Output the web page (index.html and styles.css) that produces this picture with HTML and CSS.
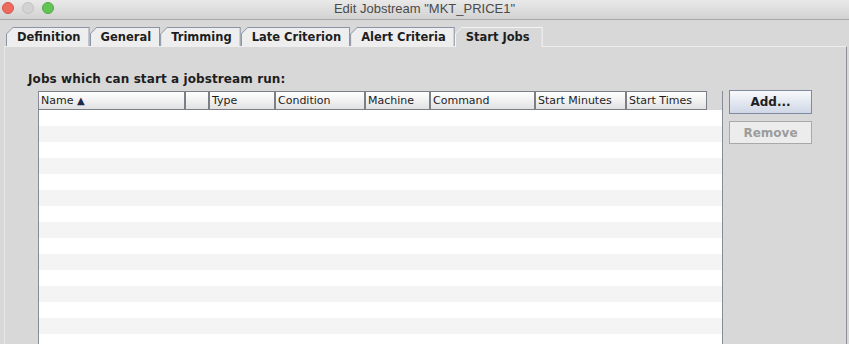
FILE: index.html
```html
<!DOCTYPE html>
<html>
<head>
    <title>Edit Jobstream</title>
    <link rel="stylesheet" href="styles.css">
</head>
<body>
    <div class="titlebar">
        <div class="lights">
            <span class="light red"></span>
            <span class="light grey"></span>
            <span class="light green"></span>
        </div>
        <div class="title">Edit Jobstream "MKT_PRICE1"</div>
        <div class="lights-spacer"></div>
    </div>

    <div class="tabs">
        <div class="tab"><span>Definition</span></div>
        <div class="tab"><span>General</span></div>
        <div class="tab"><span>Trimming</span></div>
        <div class="tab"><span>Late Criterion</span></div>
        <div class="tab"><span>Alert Criteria</span></div>
        <div class="tab selected"><span>Start Jobs</span></div>
    </div>

    <div class="panel">
        <div class="caption">Jobs which can start a jobstream run:</div>
        <div class="panel-body">
            <div class="table">
                <div class="table-head">
                    <div class="th c-name">Name <span class="sort">&#9650;</span></div>
                    <div class="th c-flag"></div>
                    <div class="th c-type">Type</div>
                    <div class="th c-cond">Condition</div>
                    <div class="th c-mach">Machine</div>
                    <div class="th c-cmd">Command</div>
                    <div class="th c-min">Start Minutes</div>
                    <div class="th c-time">Start Times</div>
                </div>
                <div class="rows">
                    <div class="row"></div><div class="row"></div><div class="row"></div>
                    <div class="row"></div><div class="row"></div><div class="row"></div>
                    <div class="row"></div><div class="row"></div><div class="row"></div>
                    <div class="row"></div><div class="row"></div><div class="row"></div>
                    <div class="row"></div><div class="row"></div><div class="row"></div>
                </div>
            </div>
            <div class="buttons">
                <button class="button default">Add...</button>
                <button class="button" disabled>Remove</button>
            </div>
        </div>
    </div>
</body>
</html>
```

FILE: styles.css
```css
html, body {
    margin: 0;
    height: 100%;
}

body {
    font-family: "DejaVu Sans", "Liberation Sans", sans-serif;
    background-color: #d8d8d8;
    color: #1e1e1e;
    overflow: hidden;
}

/* window title bar */

.titlebar {
    display: flex;
    align-items: center;
    height: 19px;
    border-bottom: 1px solid #a9a9a9;
    background: linear-gradient(#e9e9e9, #d2d2d2);
}

.lights {
    display: flex;
    gap: 8px;
    width: 52px;
    padding-left: 2px;
    margin-top: -3px;
}

.lights-spacer {
    width: 54px;
}

.light {
    width: 12px;
    height: 12px;
    border-radius: 50%;
    box-sizing: border-box;
}

.light.red {
    background-color: #ec6a5e;
    border: 1px solid #d5574c;
}

.light.grey {
    background-color: #d3d3d3;
    border: 1px solid #c2c2c2;
}

.light.green {
    background-color: #61c454;
    border: 1px solid #50a944;
}

.title {
    flex: 1;
    text-align: center;
    font-family: "Liberation Sans", Arial, sans-serif;
    font-size: 13px;
    color: #4a4a4a;
    margin-top: -2px;
}

/* tabs */

.tabs {
    display: flex;
    margin-top: 7px;
    padding-left: 6px;
    height: 19px;
}

.tab {
    height: 19px;
    background-color: #8c95a8;
    clip-path: polygon(0 7px, 7px 0, 100% 0, 100% 100%, 0 100%);
    padding: 1px 1px 0 1px;
    box-sizing: border-box;
}

.tab span {
    display: block;
    height: 18px;
    line-height: 18px;
    padding: 0 8px 0 10px;
    background-color: #eeeeee;
    clip-path: polygon(0 6px, 6px 0, 100% 0, 100% 100%, 0 100%);
    font-size: 11.5px;
    font-weight: bold;
    color: #1e1e1e;
    white-space: nowrap;
}

.tab.selected {
    background-color: #f4f4f4;
    height: 20px;
}

.tab.selected span {
    background-color: #d8d8d8;
    height: 19px;
    padding-right: 12px;
}

/* content panel */

.panel {
    margin-left: 4px;
    width: 843px;
    height: 100%;
    box-sizing: border-box;
    border-top: 1px solid #eeeeee;
    border-left: 1px solid #e6e6e6;
    border-right: 1px solid #8d9099;
    padding-left: 23px;
}

.caption {
    padding-top: 24px;
    line-height: 16px;
    font-size: 12px;
    font-weight: bold;
    color: #1e1e1e;
    letter-spacing: 0.1px;
}

.panel-body {
    display: flex;
    gap: 6px;
    margin-top: 3px;
    margin-left: 10px;
}

/* table */

.table {
    width: 685px;
    border-left: 1px solid #858b98;
    border-right: 1px solid #858b98;
    box-sizing: border-box;
    margin-top: 1px;
}

.table-head {
    display: flex;
    width: 668px;
}

.th {
    height: 19px;
    line-height: 17px;
    padding-left: 2px;
    box-sizing: border-box;
    border-top: 1px solid #7b7f86;
    border-bottom: 1px solid #7b7f86;
    border-right: 2px solid #7b7f86;
    background: linear-gradient(#ffffff, #f1f1f1 50%, #e1e1e1);
    font-family: "DejaVu Sans", sans-serif;
    font-size: 11px;
    color: #1e1e1e;
    white-space: nowrap;
    overflow: hidden;
}

.sort {
    font-size: 10px;
    color: #1c2a4e;
}

.c-name { width: 147px; }
.c-flag { width: 24px; }
.c-type { width: 66px; }
.c-cond { width: 90px; }
.c-mach { width: 65px; }
.c-cmd  { width: 105px; }
.c-min  { width: 91px; }
.c-time { width: 80px; border-right-width: 1px; }

.row {
    height: 16px;
    background-color: #ffffff;
}

.row:nth-child(even) {
    background-color: #f4f4f4;
}

/* side buttons */

.buttons {
    display: flex;
    flex-direction: column;
    gap: 7px;
}

.button {
    width: 83px;
    height: 24px;
    padding: 0;
    font-family: "DejaVu Sans", sans-serif;
    font-size: 12px;
    font-weight: bold;
    color: #1e1e1e;
    background: linear-gradient(#f8f9fb, #cfd8e6);
    border: 1px solid #7f89a0;
    border-radius: 0;
    cursor: pointer;
}

.button:disabled {
    height: 23px;
    background: #ececec;
    border-color: #a9a9a9;
    color: #9c9c9c;
    cursor: default;
}
```
